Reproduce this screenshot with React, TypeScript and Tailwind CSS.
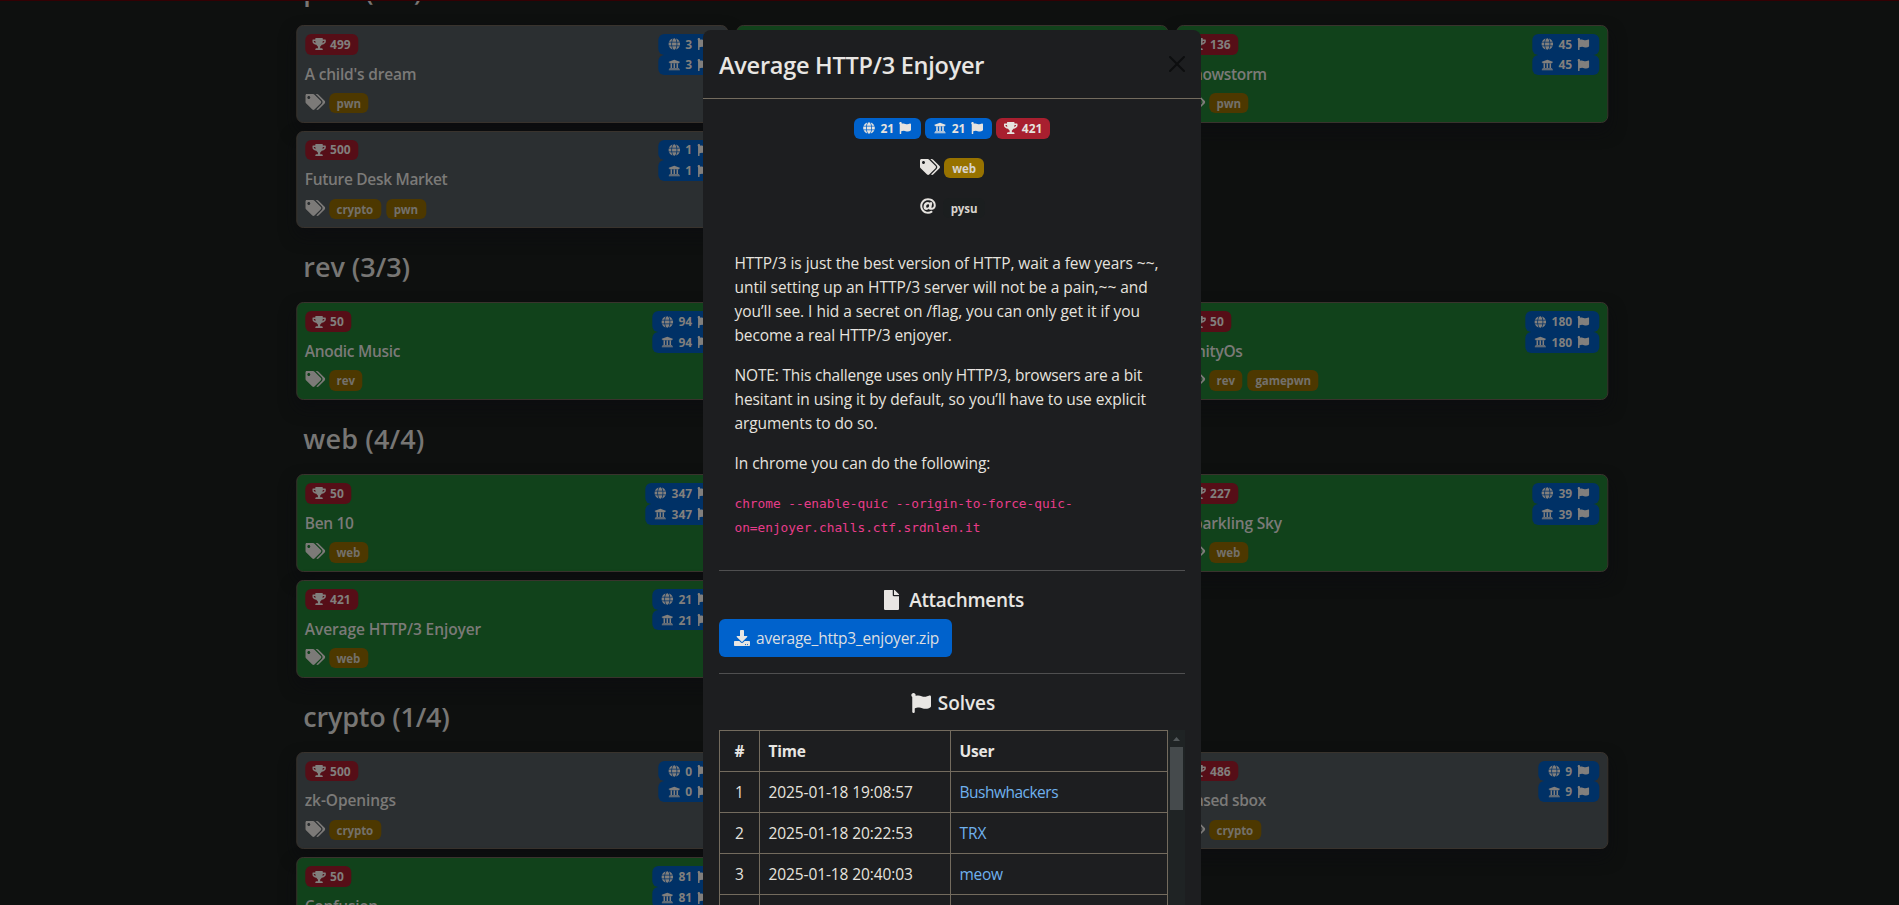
import {
  FaAt,
  FaDownload,
  FaFile,
  FaFlag,
  FaGlobe,
  FaTags,
  FaTrophy,
  FaUniversity,
} from "react-icons/fa";

type Challenge = {
  name: string;
  nameClass: string;
  points: number;
  solves: number;
  tags: string[];
  solved: boolean;
  column: "left" | "right";
};

type Category = { title: string; titleClass: string; challenges: Challenge[] };

const categories: Category[] = [
  {
    title: "rev (3/3)",
    titleClass: "tracking-[-0.05px]",
    challenges: [
      { name: "Anodic Music", nameClass: "tracking-[-0.3px]", points: 50, solves: 94, tags: ["rev"], solved: true, column: "left" },
      { name: "UnityOs", nameClass: "tracking-[-0.3px]", points: 50, solves: 180, tags: ["rev", "gamepwn"], solved: true, column: "right" },
    ],
  },
  {
    title: "web (4/4)",
    titleClass: "tracking-[0.15px]",
    challenges: [
      { name: "Ben 10", nameClass: "tracking-[-0.35px]", points: 50, solves: 347, tags: ["web"], solved: true, column: "left" },
      { name: "Sparkling Sky", nameClass: "tracking-[-0.2px]", points: 227, solves: 39, tags: ["web"], solved: true, column: "right" },
      { name: "Average HTTP/3 Enjoyer", nameClass: "tracking-[-0.1px]", points: 421, solves: 21, tags: ["web"], solved: true, column: "left" },
    ],
  },
  {
    title: "crypto (1/4)",
    titleClass: "tracking-[-0.22px]",
    challenges: [
      { name: "zk-Openings", nameClass: "tracking-[-0.1px]", points: 500, solves: 0, tags: ["crypto"], solved: false, column: "left" },
      { name: "Based sbox", nameClass: "tracking-[-0.35px]", points: 486, solves: 9, tags: ["crypto"], solved: false, column: "right" },
      { name: "Confusion", nameClass: "tracking-[-0.3px]", points: 50, solves: 81, tags: ["crypto"], solved: true, column: "left" },
    ],
  },
];

const pwn: Challenge[] = [
  { name: "A child's dream", nameClass: "tracking-[-0.2px]", points: 499, solves: 3, tags: ["pwn"], solved: false, column: "left" },
  { name: "Snowstorm", nameClass: "tracking-[-0.35px]", points: 136, solves: 45, tags: ["pwn"], solved: true, column: "right" },
  { name: "Future Desk Market", nameClass: "tracking-[-0.32px]", points: 500, solves: 1, tags: ["crypto", "pwn"], solved: false, column: "left" },
];

const solves = [
  { time: "2025-01-18 19:08:57", user: "Bushwhackers", userClass: "tracking-[-0.5px]" },
  { time: "2025-01-18 20:22:53", user: "TRX", userClass: "tracking-[-0.1px]" },
  { time: "2025-01-18 20:40:03", user: "meow", userClass: "tracking-[-0.3px]" },
  { time: "", user: "", userClass: "" },
];

const badge = "flex h-[20.8px] items-center rounded-[6px] px-[7.8px] text-[12px] leading-none font-bold";
const tagBadge = "flex h-[20.3px] items-center rounded-[6px] px-[7.8px] pt-px text-[11.5px] leading-none font-bold tracking-[-0.1px]";

function SolveBadge({ kind, count, className }: { kind: "global" | "academic"; count: number; className: string }) {
  const Icon = kind === "global" ? FaGlobe : FaUniversity;
  return (
    <span className={`${badge} gap-[3.8px] ${className}`}>
      <span className="flex w-[15px] justify-center">
        <Icon className="size-3" />
      </span>
      <span className="pt-px">{count}</span>
      <span className="flex w-[15px] justify-center">
        <FaFlag className="size-3" />
      </span>
    </span>
  );
}

function PointsBadge({ points, className }: { points: number; className: string }) {
  return (
    <span className={`${badge} gap-[4px] ${className}`}>
      <FaTrophy className="h-3 w-[13.5px]" />
      <span className="pt-px">{points}</span>
    </span>
  );
}

function ChallengeCard({ challenge }: { challenge: Challenge }) {
  const { name, nameClass, points, solves: count, tags, solved, column } = challenge;
  return (
    <article
      className={`flex h-[97.8px] justify-between rounded-[7px] border border-[#39332d] p-2 shadow-[0_8px_16px_rgba(11,12,16,0.6)] ${
        solved ? "bg-[#11421b]" : "bg-[#2b2f31]"
      } ${column === "left" ? "col-start-1" : "col-start-3"}`}
    >
      <div className="flex flex-col items-start">
        <PointsBadge points={points} className="bg-[#560e17] text-[#817f7d]" />
        <h4 className={`mt-[7px] text-[15.5px] leading-6 font-semibold text-[#7b7a78] ${nameClass}`}>{name}</h4>
        <div className="mt-[7.4px] flex">
          <FaTags className="mt-px mr-1 h-4 w-5 text-[#7c7a78]" />
          <div className="flex gap-[5px]">
            {tags.map((tag) => (
              <span key={tag} className={`${tagBadge} bg-[#4d3800] text-[#73706b]`}>
                {tag}
              </span>
            ))}
          </div>
        </div>
      </div>
      <div className="flex flex-col items-end">
        <SolveBadge kind="global" count={count} className="bg-[#003166] text-[#817f7d]" />
        <SolveBadge kind="academic" count={count} className="bg-[#003166] text-[#817f7d]" />
      </div>
    </article>
  );
}

function CategoryTitle({ title, className }: { title: string; className: string }) {
  return (
    <h2 className={`h-[66px] pt-[14px] pl-[7.5px] text-[27px] leading-[34px] font-semibold text-[#777674] ${className}`}>
      {title}
    </h2>
  );
}

function Modal() {
  return (
    <section className="absolute top-[30px] left-[703px] h-[960px] w-[498px] rounded-t-[8px] bg-[#1d1e20] text-[15.5px] leading-6 text-[#e6e3df]">
      <header className="flex h-[69px] items-center justify-between border-b border-[#736b5e] px-4">
        <h1 className="pt-px text-[23.5px] leading-9 font-semibold tracking-[-0.25px] text-[#e8e6e3]">
          Average HTTP/3 Enjoyer
        </h1>
        <svg viewBox="0 0 16 16" className="size-4 fill-[#0d0e0f]">
          <path d="M.293.293a1 1 0 0 1 1.414 0L8 6.586 14.293.293a1 1 0 1 1 1.414 1.414L9.414 8l6.293 6.293a1 1 0 0 1-1.414 1.414L8 9.414l-6.293 6.293a1 1 0 0 1-1.414-1.414L6.586 8 .293 1.707a1 1 0 0 1 0-1.414" />
        </svg>
      </header>

      <div className="px-4 pt-[19px]">
        <div className="flex h-[21px] justify-center gap-[4.4px]">
          <SolveBadge kind="global" count={21} className="bg-[#0062cc]" />
          <SolveBadge kind="academic" count={21} className="bg-[#0062cc]" />
          <PointsBadge points={421} className="bg-[#a81f2f]" />
        </div>
        <div className="mt-[19px] flex h-[21px] justify-center">
          <FaTags className="mt-px mr-1 h-4 w-5" />
          <span className={`${tagBadge} bg-[#977200] text-[#d8d4cd]`}>web</span>
        </div>
        <div className="mt-[19px] flex h-[21px] justify-center pl-px">
          <FaAt className="mr-[7px] size-4" />
          <span className={`${tagBadge} bg-[#1b1e1f] text-[#d8d4cd]`}>pysu</span>
        </div>

        <div className="mt-[32px] pl-[15.5px]">
          <p className="tracking-[-0.06px] whitespace-nowrap">
            HTTP/3 is just the best version of HTTP, wait a few years ~~,
            <br />
            <span className="tracking-[-0.05px]">until setting up an HTTP/3 server will not be a pain,~~ and</span>
            <br />
            <span className="tracking-[-0.03px]">you’ll see. I hid a secret on /flag, you can only get it if you</span>
            <br />
            <span className="tracking-[-0.13px]">become a real HTTP/3 enjoyer.</span>
          </p>
          <p className="mt-4 tracking-[-0.17px] whitespace-nowrap">
            NOTE: This challenge uses only HTTP/3, browsers are a bit
            <br />
            <span className="tracking-[-0.08px]">hesitant in using it by default, so you’ll have to use explicit</span>
            <br />
            <span className="tracking-[-0.1px]">arguments to do so.</span>
          </p>
          <p className="mt-4 tracking-[-0.06px]">In chrome you can do the following:</p>
          <p className="mt-[17px] font-['DejaVu_Sans_Mono',monospace] text-[12.8px] tracking-[-0.02px] whitespace-nowrap text-[#e83c8a]">
            chrome --enable-quic --origin-to-force-quic-
            <br />
            on=enjoyer.challs.ctf.srdnlen.it
          </p>
        </div>

        <hr className="mt-[30px] border-[#4f4f50]" />
        <h3 className="mt-[17px] flex h-6 items-center justify-center gap-[10px] pl-[4px] text-[19px] leading-6 font-semibold tracking-[-0.3px] text-[#e8e6e3]">
          <FaFile className="h-5 w-[15px]" />
          Attachments
        </h3>
        <a className="mt-[7px] flex h-[38px] w-[233px] items-center gap-[6px] rounded-[6px] bg-[#0062cc] pl-[15px] tracking-[-0.22px] text-[#dcdfe2]">
          <FaDownload className="size-4 text-[#e8e6e3]" />
          average_http3_enjoyer.zip
        </a>
        <hr className="mt-4 border-[#4f4f50]" />
        <h3 className="mt-[17px] flex h-6 items-center justify-center gap-[7px] pl-[2px] text-[19px] leading-6 font-semibold tracking-[-0.05px] text-[#e8e6e3]">
          <FaFlag className="size-5" />
          Solves
        </h3>

        <div className="mt-[15px] flex justify-between">
          <table className="w-[449px] table-fixed border-collapse">
            <colgroup>
              <col className="w-[40px]" />
              <col className="w-[191px]" />
              <col className="w-[217px]" />
            </colgroup>
            <thead>
              <tr className="h-[41px] text-left text-[#e8e6e3]">
                <th className="border border-[#736b5e] text-center">#</th>
                <th className="border border-[#736b5e] pl-[8.5px] tracking-[-0.2px]">Time</th>
                <th className="border border-[#736b5e] pl-[8.5px] tracking-[-0.2px]">User</th>
              </tr>
            </thead>
            <tbody>
              {solves.map(({ time, user, userClass }, index) => (
                <tr key={index} className="h-[41px]">
                  <td className="border border-[#736b5e] text-center">{user && index + 1}</td>
                  <td className="border border-[#736b5e] pl-[8.5px] tracking-[-0.1px]">{time}</td>
                  <td className={`border border-[#736b5e] pl-[8.5px] text-[#6fb1ee] ${userClass}`}>{user}</td>
                </tr>
              ))}
            </tbody>
          </table>
          <div className="flex w-[17px] flex-col items-center bg-[#1f2324] pt-[7px]">
            <svg viewBox="0 0 7 4" className="h-1 w-[7px] fill-[#53585a]">
              <path d="M3.5 0 7 4H0Z" />
            </svg>
            <div className="mt-[6px] h-[63px] w-[13px] bg-[#454a4c]" />
          </div>
        </div>
      </div>
    </section>
  );
}

export default function App() {
  return (
    <div className="relative h-[905px] overflow-hidden bg-[#0e100f] font-['Open_Sans','Noto_Sans',sans-serif]">
      <div className="absolute inset-x-0 top-0 z-10 h-px bg-[#330003]" />
      <main className="mx-auto -mt-[41.3px] w-[1312px] translate-x-[2.3px]">
        <CategoryTitle title="pwn (4/6)" className="tracking-[-0.3px]" />
        <div className="grid grid-cols-3 gap-2">
          <ChallengeCard challenge={pwn[0]} />
          <div className="h-[97.8px] rounded-[7px] border border-[#39332d] bg-[#11421b]" />
          <ChallengeCard challenge={pwn[1]} />
          <ChallengeCard challenge={pwn[2]} />
        </div>
        {categories.map(({ title, titleClass, challenges }) => (
          <section key={title} className="pt-2">
            <CategoryTitle title={title} className={titleClass} />
            <div className="grid grid-cols-3 gap-2">
              {challenges.map((challenge) => (
                <ChallengeCard key={challenge.name} challenge={challenge} />
              ))}
            </div>
          </section>
        ))}
      </main>
      <Modal />
    </div>
  );
}
